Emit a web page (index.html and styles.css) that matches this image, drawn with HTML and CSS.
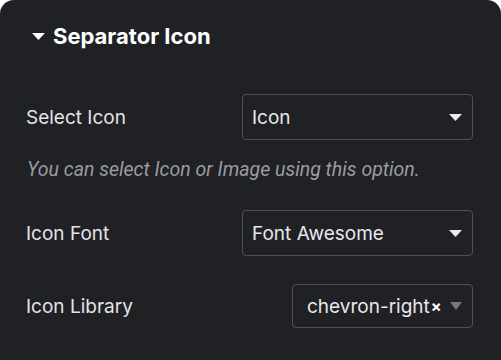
FILE: index.html
```html
<!DOCTYPE html>
<html lang="en">
<head>
    <meta charset="UTF-8">
    <meta name="viewport" content="width=device-width, initial-scale=1.0">
    <link rel="stylesheet" href="styles.css">
    <title>Separator Icon</title>
</head>
<body>
    <div class="panel">
        <div class="panel-head">
            <svg class="caret" width="13" height="7" viewBox="0 0 13 7"><path d="M0 0h13L6.5 7z" fill="#fff"/></svg>
            <h3>Separator Icon</h3>
        </div>

        <div class="control">
            <label>Select Icon</label>
            <div class="select">
                <span>Icon</span>
                <svg class="arrow" width="13" height="7" viewBox="0 0 13 7"><path d="M0 0h13L6.5 7z"/></svg>
            </div>
        </div>
        <p class="hint">You can select Icon or Image using this option.</p>

        <div class="control">
            <label>Icon Font</label>
            <div class="select">
                <span>Font Awesome</span>
                <svg class="arrow" width="13" height="7" viewBox="0 0 13 7"><path d="M0 0h13L6.5 7z"/></svg>
            </div>
        </div>

        <div class="control library">
            <label>Icon Library</label>
            <div class="select select-small">
                <span>chevron-right</span>
                <span class="clear">&times;</span>
                <svg class="arrow" width="12" height="8" viewBox="0 0 12 8"><path d="M0 0h12L6 8z"/></svg>
            </div>
        </div>
    </div>
</body>
</html>
```

FILE: styles.css
```css
body {
    margin: 0;
    background: #fff;
    font-family: Inter, "Liberation Sans", Arial, sans-serif;
}

.panel {
    width: 501px;
    height: 360px;
    box-sizing: border-box;
    background: #202125;
    border-radius: 14px 14px 0 0;
    padding: 0 28px 0 26px;
    color: #e4e4e6;
}

.panel-head {
    height: 72px;
    display: flex;
    align-items: center;
    gap: 8px;
    padding-left: 6px;
}

.panel-head .caret {
    margin-top: 1px;
}

.panel-head h3 {
    margin: 0;
    font-size: 22px;
    font-weight: 700;
    color: #fff;
}

.control {
    display: flex;
    align-items: center;
    justify-content: space-between;
    margin-top: 22px;
}

.control label {
    font-size: 19px;
}

.select {
    width: 231px;
    height: 46px;
    box-sizing: border-box;
    border: 1px solid #505156;
    border-radius: 4px;
    display: flex;
    align-items: center;
    padding: 0 10px 0 9px;
    font-size: 19px;
    color: #e8e8ea;
}

.select span {
    flex: 1;
}

.select .arrow {
    fill: #ececee;
}

.hint {
    margin: 18px 0 0 1px;
    line-height: 24px;
    font-family: Roboto, sans-serif;
    font-style: italic;
    font-size: 19.5px;
    color: #9b9ca1;
}

.hint + .control {
    margin-top: 28px;
}

.library {
    margin-top: 28px;
}

.select-small {
    width: 181px;
    height: 44px;
    padding-left: 14px;
}

.select-small span {
    flex: none;
}

.select-small .clear {
    font-weight: 700;
    font-size: 16px;
    color: #fff;
    margin-left: 1px;
}

.select-small .arrow {
    fill: #77787c;
    margin-left: auto;
}
```
